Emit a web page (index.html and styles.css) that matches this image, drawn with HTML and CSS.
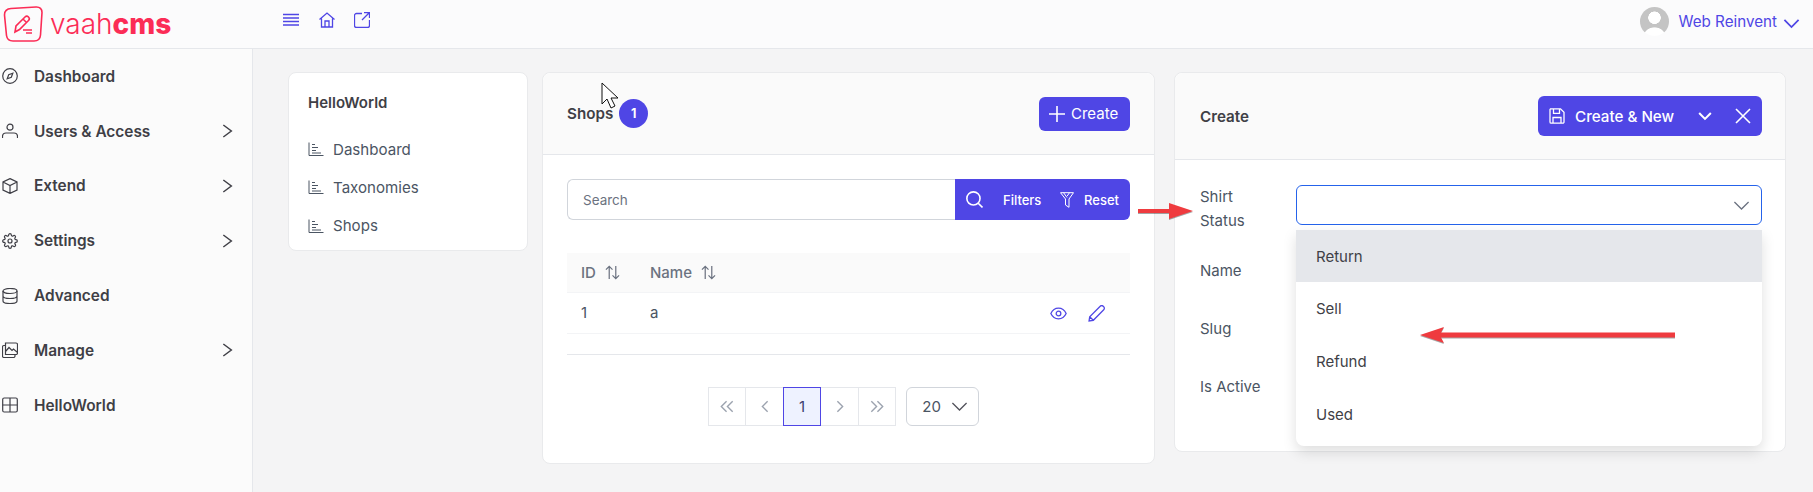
FILE: index.html
```html
<!DOCTYPE html>
<html lang="en">
<head>
    <meta charset="UTF-8">
    <meta name="viewport" content="width=device-width, initial-scale=1.0">
    <title>HelloWorld - Shops</title>
    <link rel="stylesheet" href="styles.css">
</head>
<body>
    <svg class="sprite" aria-hidden="true">
        <symbol id="i-chev-right" viewBox="0 0 24 24"><path d="M5 3l12 9-12 9"/></symbol>
        <symbol id="i-chev-down" viewBox="0 0 24 24"><path d="M2 7l10 10 10-10"/></symbol>
        <symbol id="i-chart" viewBox="0 0 16 16"><path d="M1 1.5v13h14.5M4 3.5h3M4 6.5h6M4 9.5h4M4 12h9"/></symbol>
    </svg>

    <header class="topbar">
        <div class="brand">
            <svg class="brand-mark" viewBox="0 0 40 36">
                <path d="M8 2.5L33 1c4-.2 6 2 6 5.5L37.5 29c-.3 4-3 6-6.5 6H10c-4 0-6-2-6.5-5.5L1.5 9C1.2 5 4 2.7 8 2.5z"/>
                <path d="M12 26l1-6 9-9c1-1 2.5-1 3.5 0s1 2.5 0 3.5l-9 9zM20 13l4 4M20 24h9M23 27h6"/>
            </svg>
            <span class="brand-name">vaah<b>cms</b></span>
        </div>
        <nav class="top-icons">
            <svg viewBox="0 0 16 14"><path d="M0 1.5h16M0 5h16M0 8.5h16M0 12h16"/></svg>
            <svg viewBox="0 0 16 16"><path d="M.5 7.5L8 1l7.5 6.5M2.5 6.5v8.5h11V6.5M6 15V9h4v6"/></svg>
            <svg viewBox="0 0 16 16"><path d="M8 1.5H2.5a2 2 0 0 0-2 2v10a2 2 0 0 0 2 2h11a2 2 0 0 0 2-2V8M10 .5h5.5V6M15.5 .5L8 8"/></svg>
        </nav>
        <div class="user">
            <div class="avatar"></div>
            <span>Web Reinvent</span>
            <svg class="user-chev"><use href="#i-chev-down"/></svg>
        </div>
    </header>

    <div class="layout">
        <aside class="sidebar">
            <a class="side-item">
                <svg viewBox="0 0 16 16"><circle cx="8" cy="8" r="7.3"/><path d="M10.8 5.2L9.3 9.3 5.2 10.8 6.7 6.7z"/></svg>
                <span>Dashboard</span>
            </a>
            <a class="side-item">
                <svg viewBox="0 0 16 16"><circle cx="8" cy="4.2" r="3"/><path d="M.5 15v-1.5c0-2 1.5-3.500 3.500-3.500h8c2 0 3.500 1.500 3.500 3.500V15"/></svg>
                <span>Users &amp; Access</span>
                <svg class="side-chev"><use href="#i-chev-right"/></svg>
            </a>
            <a class="side-item">
                <svg viewBox="0 0 16 16"><path d="M8 .6l7 3.4v8l-7 3.4-7-3.4V4zM1 4l7 3.5L15 4M8 7.5v7.9"/></svg>
                <span>Extend</span>
                <svg class="side-chev"><use href="#i-chev-right"/></svg>
            </a>
            <a class="side-item">
                <svg viewBox="0 0 24 24" class="thick"><circle cx="12" cy="12" r="3"/><path d="M19.4 15a1.65 1.65 0 0 0 .33 1.82l.06.06a2 2 0 0 1 0 2.83 2 2 0 0 1-2.83 0l-.06-.06a1.65 1.65 0 0 0-1.82-.33 1.65 1.65 0 0 0-1 1.51V21a2 2 0 0 1-2 2 2 2 0 0 1-2-2v-.09A1.65 1.65 0 0 0 9 19.4a1.65 1.65 0 0 0-1.82.33l-.06.06a2 2 0 0 1-2.83 0 2 2 0 0 1 0-2.83l.06-.06a1.65 1.65 0 0 0 .33-1.82 1.65 1.65 0 0 0-1.51-1H3a2 2 0 0 1-2-2 2 2 0 0 1 2-2h.09A1.65 1.65 0 0 0 4.6 9a1.65 1.65 0 0 0-.33-1.82l-.06-.06a2 2 0 0 1 0-2.83 2 2 0 0 1 2.83 0l.06.06a1.65 1.65 0 0 0 1.82.33H9a1.65 1.65 0 0 0 1-1.51V3a2 2 0 0 1 2-2 2 2 0 0 1 2 2v.09a1.65 1.65 0 0 0 1 1.51 1.65 1.65 0 0 0 1.82-.33l.06-.06a2 2 0 0 1 2.83 0 2 2 0 0 1 0 2.83l-.06.06a1.65 1.65 0 0 0-.33 1.82V9a1.65 1.65 0 0 0 1.51 1H21a2 2 0 0 1 2 2 2 2 0 0 1-2 2h-.09a1.65 1.65 0 0 0-1.51 1z"/></svg>
                <span>Settings</span>
                <svg class="side-chev"><use href="#i-chev-right"/></svg>
            </a>
            <a class="side-item">
                <svg viewBox="0 0 16 16"><ellipse cx="8" cy="3" rx="7" ry="2.5"/><path d="M1 3v10c0 1.4 3 2.5 7 2.5s7-1.100 7-2.500V3M1 8c0 1.400 3 2.500 7 2.500s7-1.100 7-2.500"/></svg>
                <span>Advanced</span>
            </a>
            <a class="side-item">
                <svg viewBox="0 0 16 16"><path d="M3.5 1H14a1.500 1.500 0 0 1 1.500 1.500V11a1.500 1.500 0 0 1-1.500 1.500H3.500zM3.500 9.500l3.500-4 3 3 1.500-1.500 4 3.500M3.500 3.500H2A1.500 1.500 0 0 0 .5 5v9A1.500 1.500 0 0 0 2 15.500h9.500A1.500 1.500 0 0 0 13 14v-1.500"/></svg>
                <span>Manage</span>
                <svg class="side-chev"><use href="#i-chev-right"/></svg>
            </a>
            <a class="side-item">
                <svg viewBox="0 0 16 16"><rect x=".7" y="1" width="14.6" height="14" rx="1.5"/><path d="M8 1v14M.7 8h14.6"/></svg>
                <span>HelloWorld</span>
            </a>
        </aside>

        <main class="content">
            <section class="card menu-card">
                <h3>HelloWorld</h3>
                <a class="menu-item"><svg><use href="#i-chart"/></svg>Dashboard</a>
                <a class="menu-item"><svg><use href="#i-chart"/></svg>Taxonomies</a>
                <a class="menu-item"><svg><use href="#i-chart"/></svg>Shops</a>
            </section>

            <section class="card shops-card">
                <div class="card-head shops-head">
                    <div class="head-title">
                        <h4>Shops</h4>
                        <span class="badge">1</span>
                    </div>
                    <button class="btn btn-create">
                        <svg viewBox="0 0 16 16"><path d="M8 0v16M0 8h16"/></svg>
                        Create
                    </button>
                </div>
                <div class="card-body">
                    <div class="search-row">
                        <input class="search-input" type="text" placeholder="Search">
                        <div class="search-btns">
                            <button class="search-go">
                                <svg viewBox="0 0 16 16"><circle cx="7" cy="7" r="6.2"/><path d="M11.5 11.5l4 4"/></svg>
                            </button>
                            <button class="search-filters">Filters</button>
                            <button class="search-reset">
                                <svg viewBox="0 0 14 16"><path d="M.5 .7h13L9 7v8.3L5.5 13V7zM3.500 .7L7 5.500M9.500 .7L7.200 4"/></svg>
                                Reset
                            </button>
                        </div>
                    </div>

                    <table class="shops-table">
                        <thead>
                            <tr>
                                <th class="col-id">ID <svg class="sort" viewBox="0 0 16 16"><path d="M4.5 15V1.500M1 5l3.500-3.500L8 5M11.500 1v13.500M8 11l3.500 3.500L15 11"/></svg></th>
                                <th class="col-name">Name <svg class="sort" viewBox="0 0 16 16"><path d="M4.5 15V1.500M1 5l3.500-3.500L8 5M11.500 1v13.500M8 11l3.500 3.500L15 11"/></svg></th>
                                <th></th>
                            </tr>
                        </thead>
                        <tbody>
                            <tr>
                                <td>1</td>
                                <td>a</td>
                                <td class="row-actions">
                                    <svg viewBox="0 0 16 16"><path d="M.8 8C2.4 4.600 5 3 8 3s5.600 1.600 7.200 5c-1.600 3.400-4.200 5-7.200 5S2.400 11.400.8 8z"/><circle cx="8" cy="8" r="2.2"/></svg>
                                    <svg viewBox="0 0 16 16"><path d="M1 15l.6-4L11.500 1.200c.8-.8 2-.8 2.800 0l.5.5c.8.8.8 2 0 2.800L5 14.400zM1.600 11L5 14.400"/></svg>
                                </td>
                            </tr>
                        </tbody>
                    </table>
                    <div class="table-end"></div>

                    <div class="pager">
                        <div class="pages">
                            <span class="page"><svg viewBox="0 0 16 14"><path d="M7.5 1l-6 6 6 6M14.5 1l-6 6 6 6"/></svg></span>
                            <span class="page"><svg viewBox="0 0 16 14"><path d="M11 1L5 7l6 6"/></svg></span>
                            <span class="page page-on">1</span>
                            <span class="page"><svg viewBox="0 0 16 14"><path d="M5 1l6 6-6 6"/></svg></span>
                            <span class="page"><svg viewBox="0 0 16 14"><path d="M1.5 1l6 6-6 6M8.5 1l6 6-6 6"/></svg></span>
                        </div>
                        <div class="per-page">
                            <span>20</span>
                            <svg><use href="#i-chev-down"/></svg>
                        </div>
                    </div>
                </div>
            </section>

            <section class="card create-card">
                <div class="card-head create-head">
                    <h4>Create</h4>
                    <div class="btn-group">
                        <button class="btn btn-save">
                            <svg viewBox="0 0 16 16"><path d="M1.5 .8h10L15 4.3V14a1.200 1.200 0 0 1-1.200 1.200H2.200A1.200 1.200 0 0 1 1 14V1.500zM4.500 .8v4.500h6V.8M4 15.200V9.500h8v5.700"/></svg>
                            Create &amp; New
                        </button>
                        <button class="btn btn-more"><svg><use href="#i-chev-down"/></svg></button>
                        <button class="btn btn-close"><svg viewBox="0 0 16 16"><path d="M1 1l14 14M15 1L1 15"/></svg></button>
                    </div>
                </div>
                <div class="card-body form-body">
                    <div class="form-row">
                        <label>Shirt<br>Status</label>
                        <div class="select-wrap">
                            <div class="select">
                                <svg><use href="#i-chev-down"/></svg>
                            </div>
                            <ul class="dropdown">
                                <li class="option-on">Return</li>
                                <li>Sell</li>
                                <li>Refund</li>
                                <li>Used</li>
                            </ul>
                        </div>
                    </div>
                    <div class="form-row">
                        <label>Name</label>
                        <input class="field" type="text">
                    </div>
                    <div class="form-row">
                        <label>Slug</label>
                        <input class="field" type="text">
                    </div>
                    <div class="form-row">
                        <label>Is Active</label>
                        <input class="field" type="text">
                    </div>
                </div>
            </section>
        </main>
    </div>

    <!-- annotations drawn on top of the screenshot -->
    <svg class="note note-right" viewBox="0 0 55 16"><path d="M0 6h31V0l24 8-24 8v-6H0z"/></svg>
    <svg class="note note-left" viewBox="0 0 255 16"><path d="M0 8L24 0l-3 5.500h234v5H21l3 5.500z"/></svg>
    <svg class="pointer" viewBox="0 0 18 28"><path d="M1 1v21l5-5 4 9 4-2-4-8h7z"/></svg>
</body>
</html>
```

FILE: styles.css
```css
* {
    box-sizing: border-box;
}

body {
    margin: 0;
    height: 492px;
    overflow: hidden;
    position: relative;
    font-family: Inter, "Liberation Sans", sans-serif;
    font-size: 15px;
    color: #4b5563;
    background-color: #f4f4f5;
}

svg {
    fill: none;
    stroke: currentColor;
    stroke-width: 1.2;
    flex-shrink: 0;
}

.sprite {
    display: none;
}

button {
    font-family: inherit;
    border: none;
    cursor: pointer;
}

/* Top bar */
.topbar {
    height: 49px;
    display: flex;
    align-items: center;
    background-color: #fbfbfc;
    border-bottom: 1px solid #e5e7eb;
    color: #4f46e5;
}

.brand {
    width: 283px;
    display: flex;
    align-items: center;
    gap: 7px;
    padding-left: 3px;
    color: #fb2c56;
}

.brand-mark {
    width: 40px;
    height: 36px;
    stroke-width: 1.6;
}

.brand-name {
    font-size: 28px;
    font-weight: 300;
    line-height: 30px;
}

.brand-name b {
    font-weight: 800;
}

.top-icons {
    display: flex;
    align-items: center;
    gap: 19.5px;
    margin-bottom: 8px;
}

.top-icons svg {
    width: 16px;
    height: 16px;
    stroke-width: 1.3;
}

.user {
    margin-left: auto;
    margin-right: 13px;
    margin-bottom: 5px;
    display: flex;
    align-items: center;
    gap: 10px;
    font-size: 15.2px;
}

.avatar {
    width: 29px;
    height: 29px;
    border-radius: 50%;
    background-color: #c4c4c4;
    background-image:
        radial-gradient(circle at 50% 37%, #fff 0, #fff 6px, transparent 6.5px),
        radial-gradient(ellipse 11px 9px at 50% 100%, #fff 0, #fff 10px, transparent 11px);
}

.user-chev {
    width: 17px;
    height: 17px;
    margin-left: -4px;
    margin-top: 4px;
    stroke-width: 2.5;
}

/* Layout */
.layout {
    display: flex;
    height: 443px;
}

.sidebar {
    width: 253px;
    flex-shrink: 0;
    background-color: #fbfbfb;
    border-right: 1px solid #e5e7eb;
    color: #3f3f46;
}

.side-item {
    height: 54.8px;
    display: flex;
    align-items: center;
    padding: 0 16px 0 2px;
    font-weight: 600;
    font-size: 15.4px;
}

.side-item svg:first-child {
    width: 16px;
    height: 16px;
    margin-right: 16px;
}

.side-item .thick {
    stroke-width: 1.8;
}

.side-chev {
    width: 16px;
    height: 16px;
    margin-left: auto;
    stroke-width: 2.2;
}

.content {
    flex: 1;
    display: flex;
    align-items: flex-start;
    padding: 23px 0 0 35px;
}

.card {
    background-color: #fff;
    border: 1px solid #e9eaec;
    border-radius: 8px;
}

.card h3,
.card h4 {
    margin: 0;
    font-weight: 600;
    color: #3f3f46;
}

.card h3 {
    font-size: 15px;
}

.card h4 {
    font-size: 15.2px;
}

.card-head {
    display: flex;
    align-items: center;
    justify-content: space-between;
    background-color: #fafafa;
    border-bottom: 1px solid #e5e7eb;
    border-radius: 8px 8px 0 0;
}

.btn {
    display: flex;
    align-items: center;
    background-color: #4f46e5;
    color: #fff;
    font-size: 15px;
}

/* Left menu card */
.menu-card {
    width: 240px;
    height: 179px;
    margin-right: 14px;
    padding: 21px 19px;
}

.menu-card h3 {
    margin-bottom: 18px;
    line-height: 18px;
}

.menu-item {
    height: 38.3px;
    display: flex;
    align-items: center;
    gap: 9px;
    font-size: 15.1px;
}

.menu-item svg {
    width: 16px;
    height: 16px;
    stroke-width: 1;
}

/* Shops card */
.shops-card {
    width: 613px;
    height: 392px;
    margin-right: 19px;
}

.shops-head {
    height: 82px;
    padding: 0 24px;
}

.head-title {
    display: flex;
    align-items: center;
    gap: 6px;
}

.badge {
    width: 29px;
    height: 29px;
    border-radius: 50%;
    background-color: #4f46e5;
    color: #fff;
    font-size: 12.5px;
    font-weight: 700;
    display: flex;
    align-items: center;
    justify-content: center;
}

.btn-create {
    height: 34px;
    width: 91px;
    gap: 6px;
    padding: 0 0 0 10px;
    border-radius: 6px;
}

.btn-create svg {
    width: 16px;
    height: 16px;
    stroke-width: 1.6;
}

.card-body {
    padding: 24px 24px 0;
}

.search-row {
    display: flex;
    height: 41px;
}

.search-input {
    flex: 1;
    min-width: 0;
    padding: 0 15px;
    border: 1px solid #d1d5db;
    border-right: none;
    border-radius: 6px 0 0 6px;
    font-family: inherit;
    font-size: 13.5px;
    outline: none;
}

.search-input::placeholder {
    color: #6b7280;
}

.search-btns {
    width: 175px;
    display: flex;
    align-items: stretch;
    background-color: #4f46e5;
    border-radius: 0 6px 6px 0;
    color: #fff;
}

.search-btns button {
    display: flex;
    align-items: center;
    background: none;
    color: #fff;
    font-size: 13px;
    font-weight: 500;
    padding: 0;
}

.search-btns .search-go {
    width: 48px;
    padding-left: 11px;
}

.search-go svg {
    width: 17px;
    height: 17px;
    stroke-width: 1.5;
}

.search-filters {
    width: 49px;
}

.search-btns .search-reset {
    gap: 10px;
    padding-left: 8px;
}

.search-reset svg {
    width: 14px;
    height: 16px;
    stroke-width: 1;
}

.shops-table {
    width: 100%;
    margin-top: 33px;
    border-collapse: collapse;
    table-layout: fixed;
}

.shops-table th {
    height: 39px;
    padding: 0 14px;
    text-align: left;
    font-weight: 500;
    font-size: 15px;
    color: #6b7280;
    background-color: #fafafa;
    border-bottom: 1px solid #f3f4f6;
}

.shops-table .col-id {
    width: 69px;
}

.shops-table .col-name {
    width: 140px;
}

.sort {
    width: 15px;
    height: 15px;
    margin-left: 5px;
    vertical-align: -2px;
    stroke-width: 1.3;
}

.shops-table td {
    height: 41px;
    padding: 0 14px;
    border-bottom: 1px solid #f3f4f6;
    font-size: 15px;
}

.shops-table .row-actions {
    padding-right: 25px;
    text-align: right;
    color: #4f46e5;
}

.row-actions svg {
    width: 17px;
    height: 17px;
    margin-left: 17px;
    vertical-align: middle;
}

.table-end {
    margin-top: 20px;
    border-top: 1px solid #e5e7eb;
}

.pager {
    margin-top: 32px;
    display: flex;
    justify-content: center;
    gap: 10px;
    padding-right: 9px;
}

.pages {
    display: flex;
}

.page {
    width: 38.5px;
    height: 39px;
    margin-left: -1px;
    display: flex;
    align-items: center;
    justify-content: center;
    border: 1px solid #e5e7eb;
    color: #9ca3af;
}

.page svg {
    width: 14px;
    height: 13px;
    stroke-width: 1.6;
}

.page-on {
    position: relative;
    border-color: #4f46e5;
    background-color: #eef2ff;
    color: #3f3f6e;
}

.per-page {
    width: 73px;
    height: 39px;
    display: flex;
    align-items: center;
    gap: 10px;
    padding-left: 15px;
    border: 1px solid #d1d5db;
    border-radius: 6px;
}

.per-page svg {
    width: 17px;
    height: 17px;
    stroke-width: 1.8;
    color: #52525b;
}

/* Create card */
.create-card {
    width: 612px;
    height: 380px;
}

.create-head {
    height: 87px;
    padding: 0 23px 0 25px;
}

.btn-group {
    display: flex;
    height: 40px;
    border-radius: 6px;
    overflow: hidden;
}

.btn-save {
    width: 159px;
    gap: 10px;
    padding: 0 0 0 11px;
    font-size: 15.2px;
    font-weight: 500;
}

.btn-save svg {
    width: 16px;
    height: 16px;
    stroke-width: 1.3;
}

.btn-more {
    width: 28px;
    padding: 0 0 0 1px;
}

.btn-more svg {
    width: 14px;
    height: 14px;
    stroke-width: 3.5;
}

.btn-close {
    width: 37px;
    padding: 0 0 0 10px;
}

.btn-close svg {
    width: 16px;
    height: 16px;
    stroke-width: 1.6;
}

.form-body {
    padding: 25px 23px 0 25px;
}

.form-row {
    display: flex;
    align-items: center;
    margin-bottom: 18px;
}

.form-row:first-child {
    align-items: flex-start;
}

.form-row label {
    width: 96px;
    flex-shrink: 0;
    line-height: 24px;
    font-size: 15px;
}

.field {
    flex: 1;
    height: 40px;
    border: 1px solid #d1d5db;
    border-radius: 6px;
}

.select-wrap {
    flex: 1;
    position: relative;
}

.select {
    height: 40px;
    display: flex;
    align-items: center;
    justify-content: flex-end;
    padding-right: 11px;
    border: 1px solid #2563eb;
    border-radius: 6px;
    color: #6b7280;
}

.select svg {
    width: 17px;
    height: 17px;
    stroke-width: 1.8;
}

.dropdown {
    position: absolute;
    top: 45px;
    left: 0;
    right: 0;
    z-index: 2;
    margin: 0;
    padding: 0;
    list-style: none;
    background-color: #fff;
    border-radius: 0 0 8px 8px;
    box-shadow: 0 6px 14px rgba(0, 0, 0, 0.13);
    height: 216px;
}

.dropdown li {
    height: 53px;
    display: flex;
    align-items: center;
    padding-left: 20px;
    font-size: 15px;
    color: #3f3f46;
}

.dropdown .option-on {
    height: 52px;
    background-color: #e5e7eb;
}

/* Annotations */
.note {
    position: absolute;
    z-index: 3;
    fill: #ef3b3f;
    stroke: none;
    filter: drop-shadow(0 1px 0 rgba(0, 0, 0, 0.35));
}

.note-right {
    left: 1138px;
    top: 203px;
    width: 55px;
    height: 16px;
}

.note-left {
    left: 1420px;
    top: 327px;
    width: 255px;
    height: 16px;
}

.pointer {
    position: absolute;
    z-index: 3;
    left: 601px;
    top: 82px;
    width: 18px;
    height: 28px;
    fill: #fff;
    stroke: #111;
    stroke-width: 1;
}
```
